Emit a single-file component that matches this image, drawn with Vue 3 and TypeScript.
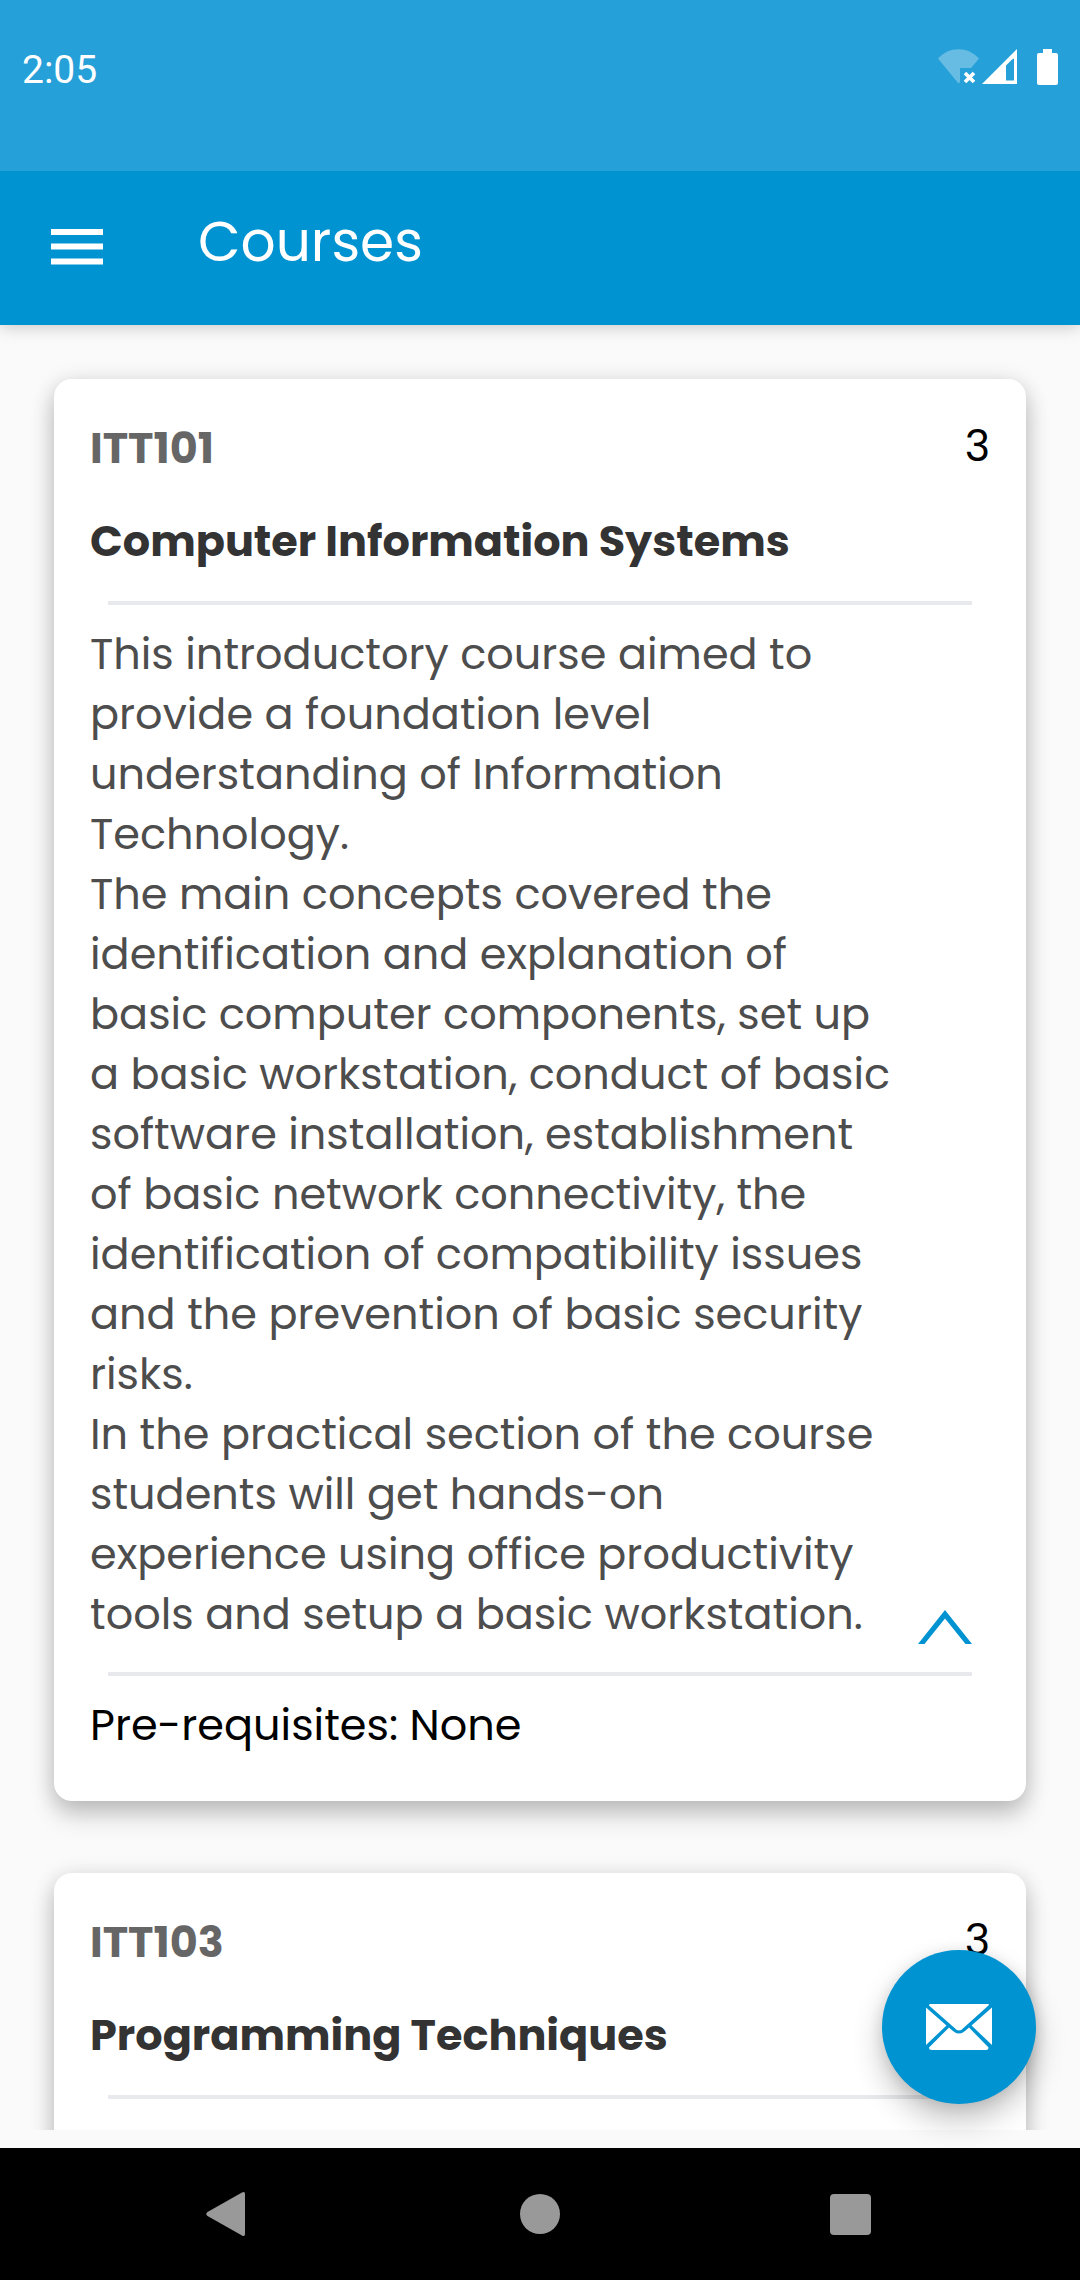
<script setup lang="ts">
import { ref } from 'vue'

interface Course {
  code: string
  credits: number
  title: string
  description: string
  prerequisites: string
}

const courses: Course[] = [
  {
    code: 'ITT101',
    credits: 3,
    title: 'Computer Information Systems',
    description: `This introductory course aimed to
provide a foundation level
understanding of Information
Technology.
The main concepts covered the
identification and explanation of
basic computer components, set up
a basic workstation, conduct of basic
software installation, establishment
of basic network connectivity, the
identification of compatibility issues
and the prevention of basic security
risks.
In the practical section of the course
students will get hands-on
experience using office productivity
tools and setup a basic workstation.`,
    prerequisites: 'None',
  },
  {
    code: 'ITT103',
    credits: 3,
    title: 'Programming Techniques',
    description: '',
    prerequisites: '',
  },
]

const expanded = ref<Record<string, boolean>>({ ITT101: true, ITT103: true })

function toggle(code: string): void {
  expanded.value[code] = !expanded.value[code]
}
</script>

<template>
  <div class="screen">
    <header class="top">
      <div class="status">
        <time class="clock">2:05</time>
        <div class="indicators">
          <svg class="wifi" width="41" height="35" viewBox="0 0 41 35" aria-hidden="true">
            <path d="M0 9.500C11-3 30-3 41 9.500L33 19H22V33L20.500 34.500Z" fill="#fff" fill-opacity=".3" />
            <path d="M27 24l9 9M36 24l-9 9" stroke="#fff" stroke-width="3.600" />
          </svg>
          <svg class="signal" width="35" height="35" viewBox="0 0 35 35" aria-hidden="true">
            <path fill="#fff" fill-rule="evenodd" d="M35 0V35H0ZM32 9.500L30 10.500L24 16.500V31.500H32Z" />
          </svg>
          <svg width="21" height="36" viewBox="0 0 21 36" aria-hidden="true">
            <path fill="#fff" d="M6 0h9v4h4q2 0 2 2v28q0 2-2 2H2q-2 0-2-2V6q0-2 2-2h4z" />
          </svg>
        </div>
      </div>
      <div class="appbar">
        <button class="menu" type="button" aria-label="Open menu">
          <svg width="52" height="36" viewBox="0 0 52 36" aria-hidden="true">
            <path fill="#fff" d="M0 0h52v6H0zM0 14.500h52v6H0zM0 29.500h52v6H0z" />
          </svg>
        </button>
        <h1 class="heading">Courses</h1>
      </div>
    </header>

    <div class="body">
      <main class="list">
        <article v-for="course in courses" :key="course.code" class="card">
          <div class="row">
            <span class="code">{{ course.code }}</span>
            <span class="credits">{{ course.credits }}</span>
          </div>
          <h2 class="title">{{ course.title }}</h2>
          <hr class="rule" />
          <div class="details">
            <p v-if="expanded[course.code]" class="description">{{ course.description }}</p>
            <button
              v-if="course.description"
              class="toggle"
              type="button"
              aria-label="Toggle description"
              :aria-expanded="expanded[course.code]"
              @click="toggle(course.code)"
            >
              <svg width="54" height="34" viewBox="0 0 54 34" aria-hidden="true">
                <path fill="#0093d1" d="M27 0L54 34H47.500L27 8.500L6.500 34H0Z" />
              </svg>
            </button>
          </div>
          <template v-if="course.prerequisites">
            <hr class="rule" />
            <p class="prerequisites">Pre-requisites: {{ course.prerequisites }}</p>
          </template>
        </article>
      </main>
      <button class="fab" type="button" aria-label="Send a message">
        <svg width="66" height="46" viewBox="0 0 66 46" aria-hidden="true">
          <path
            fill="#fff"
            d="M4 0H62Q63 0 63 1L38 23.500Q33 29.500 28 23.500L3 1.500Q3 0 4 0ZM0 3.500L20.500 21.500L0 41ZM66 3.500V41L45.500 21.500ZM23 23.500L27 27Q33 32 39 27L43 23.500L62.500 43.500Q62.500 46 60 46H6Q3 46 3 43.500Z"
          />
        </svg>
      </button>
    </div>

    <nav class="sysnav" aria-label="System">
      <button type="button" aria-label="Back">
        <svg width="44" height="48" viewBox="0 0 44 48" aria-hidden="true">
          <path fill="#999" d="M38 2.500Q41 1 41 4V44Q41 47 38 45.500L3.500 26Q1 24 3.500 22Z" />
        </svg>
      </button>
      <button type="button" aria-label="Home">
        <svg width="44" height="48" viewBox="0 0 44 48" aria-hidden="true">
          <circle cx="22" cy="24" r="20" fill="#999" />
        </svg>
      </button>
      <button type="button" aria-label="Recent apps">
        <svg class="recent" width="44" height="48" viewBox="0 0 44 48" aria-hidden="true">
          <rect x="-2" y="4" width="41" height="41" rx="4" fill="#999" />
        </svg>
      </button>
    </nav>
  </div>
</template>

<style>
body {
  margin: 0;
}
</style>

<style scoped>
.screen {
  display: flex;
  flex-direction: column;
  height: 100vh;
  background: #fafafa;
  color: #000;
  font-family: Poppins, Inter, sans-serif;
  font-size: 43px;
  line-height: 60px;
}

button {
  display: block;
  padding: 0;
  border: 0;
  background: none;
  cursor: pointer;
}

svg {
  display: block;
}

.top {
  position: relative;
  z-index: 1;
  flex: none;
  background: #0093d1;
  box-shadow: 0 2px 16px rgba(0, 0, 0, 0.2);
}

.status {
  display: flex;
  justify-content: space-between;
  align-items: flex-start;
  box-sizing: border-box;
  height: 171px;
  padding: 40px 22px 0;
  background: #26a0d8;
}

.clock {
  color: #fff;
  font-family: Roboto, sans-serif;
  font-size: 39px;
}

.indicators {
  display: flex;
  padding-top: 9px;
}

.wifi {
  margin-right: 3px;
}

.signal {
  margin-right: 20px;
}

.appbar {
  display: flex;
  align-items: center;
  height: 154px;
  padding: 0 51px;
  gap: 95px;
}

.menu {
  margin-bottom: 2px;
}

.heading {
  margin: 0 0 12px;
  color: #fff;
  font-size: 55px;
  font-weight: 400;
}

.body {
  position: relative;
  display: flex;
  flex: 1;
  min-height: 0;
}

.list {
  flex: 1;
  margin-bottom: 18px;
  padding: 54px 54px 0;
  overflow: hidden;
}

.card {
  margin-bottom: 72px;
  padding: 39px 36px 46px;
  border-radius: 18px;
  background: #fff;
  box-shadow: 0 14px 24px rgba(0, 0, 0, 0.2), 0 2px 22px rgba(0, 0, 0, 0.12);
}

.row {
  display: flex;
  justify-content: space-between;
  align-items: flex-start;
}

.code {
  color: #666;
  font-weight: 700;
}

.credits {
  line-height: 56px;
}

.title {
  margin: 33px 0 30px;
  color: #333;
  font-size: 43px;
  font-weight: 700;
}

.rule {
  height: 4px;
  margin: 0 18px 19px;
  border: 0;
  background: #e8e9ed;
}

.details {
  display: flex;
  justify-content: space-between;
  align-items: flex-end;
  min-height: 60px;
  margin-bottom: 28px;
  padding-right: 18px;
}

.description {
  margin: 0;
  color: #4d4d4d;
  white-space: pre-line;
}

.toggle {
  flex: none;
  margin-left: auto;
}

.prerequisites {
  margin: 0;
}

.fab {
  position: absolute;
  right: 44px;
  bottom: 44px;
  display: grid;
  place-items: center;
  width: 154px;
  height: 154px;
  border-radius: 50%;
  background: #0093d1;
  box-shadow: 0 16px 30px rgba(0, 0, 0, 0.24), 0 2px 14px rgba(0, 0, 0, 0.1);
}

.sysnav {
  display: flex;
  flex: none;
  justify-content: center;
  align-items: center;
  gap: 25%;
  height: 132px;
  background: #000;
}

.recent {
  overflow: visible;
}
</style>
